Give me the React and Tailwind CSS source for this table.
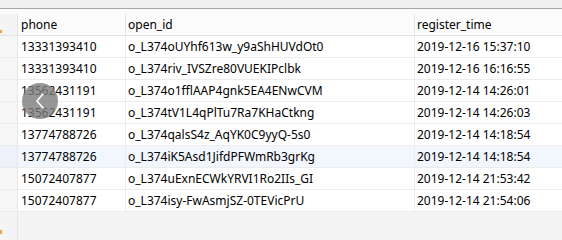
import React from 'react'

const rows = [
  ['13331393410', 'o_L374oUYhf613w_y9aShHUVdOt0', '2019-12-16 15:37:10'],
  ['13331393410', 'o_L374riv_IVSZre80VUEKIPclbk', '2019-12-16 16:16:55'],
  ['13562431191', 'o_L374o1fflAAP4gnk5EA4ENwCVM', '2019-12-14 14:26:01'],
  ['13562431191', 'o_L374tV1L4qPlTu7Ra7KHaCtkng', '2019-12-14 14:26:03'],
  ['13774788726', 'o_L374qalsS4z_AqYK0C9yyQ-5s0', '2019-12-14 14:18:54'],
  ['13774788726', 'o_L374iK5Asd1JifdPFWmRb3grKg', '2019-12-14 14:18:54'],
  ['15072407877', 'o_L374uExnECWkYRVI1Ro2IIs_GI', '2019-12-14 21:53:42'],
  ['15072407877', 'o_L374isy-FwAsmjSZ-0TEVicPrU', '2019-12-14 21:54:06'],
]

export default function App() {
  return (
    <div
      className="relative w-[562px] h-[240px] overflow-hidden bg-[#f4f4f4] text-[12px] text-black"
      style={{ fontFamily: '"Noto Sans", "Liberation Sans", sans-serif' }}
    >
      {/* toolbar strip */}
      <div className="h-[9px] bg-[#f0f0f0] border-b border-[#a8a8a8]" />

      {/* header */}
      <div className="bg-[#fbfbfb] border-b border-[#e3e3e3]">
        <div className="h-[5px]" />
        <div className="flex h-[21px] items-center">
          <div className="w-[18px] h-full bg-[#f4f4f4] border-r border-[#e3e3e3]" />
          <div className="w-[108px] h-full flex items-center pl-[3px] border-r border-[#e3e3e3]">phone</div>
          <div className="w-[289px] h-full flex items-center pl-[2px] border-r border-[#e3e3e3]">open_id</div>
          <div className="flex-1 h-full flex items-center pl-[2px]">register_time</div>
        </div>
      </div>

      {/* rows */}
      {rows.map((r, i) => (
        <div
          key={i}
          className={
            'flex h-[22px] border-b border-[#ececec] ' +
            (i === 5 ? 'bg-[#f2f7fd]' : 'bg-white')
          }
        >
          <div className={'w-[18px] border-r border-[#e8e8e8] ' + (i === 5 ? 'bg-[#eef2f8]' : 'bg-[#f6f6f6]')} />
          <div className="w-[108px] flex items-center pl-[3px] border-r border-[#ececec]">{r[0]}</div>
          <div className="w-[289px] flex items-center pl-[2px] border-r border-[#ececec]">{r[1]}</div>
          <div className="flex-1 flex items-center pl-[2px]">{r[2]}</div>
        </div>
      ))}

      {/* left gutter below rows */}
      <div className="w-[18px] h-[29px] border-r border-[#e8e8e8]" />

      {/* orange ticks on the left edge */}
      <span className="absolute left-0 top-[30px] w-[2px] h-[3px] bg-[#f0a040]" />
      <span className="absolute left-0 top-[230px] w-[2px] h-[4px] bg-[#f0a040]" />

      {/* back button overlay */}
      <div className="absolute left-[22px] top-[83px] w-[36px] h-[36px] rounded-full bg-[#7c7c7c]/80 flex items-center justify-center">
        <svg width="14" height="18" viewBox="0 0 14 18" fill="none">
          <path d="M10 2 L4 9 L10 16" stroke="white" strokeWidth="1.6" strokeLinecap="round" strokeLinejoin="round" />
        </svg>
      </div>
    </div>
  )
}
